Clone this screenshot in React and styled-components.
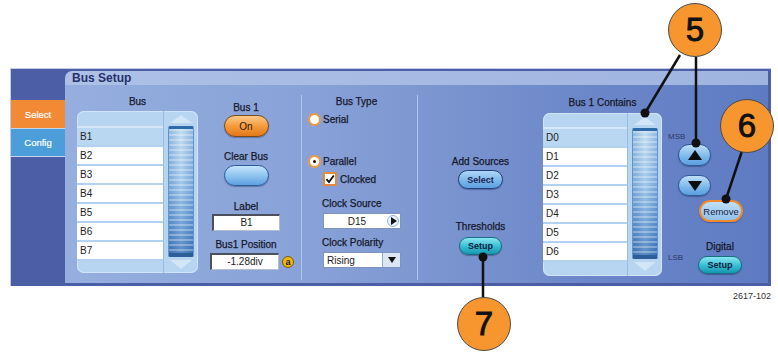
import styled, { createGlobalStyle } from 'styled-components';

const Global = createGlobalStyle`
  html, body { margin: 0; padding: 0; background: #fff; }
  body { font-family: "Liberation Sans", Arial, sans-serif; }
`;

const Page = styled.div`
  position: relative;
  width: 778px;
  height: 352px;
  padding-top: 68px;
  box-sizing: border-box;
  overflow: hidden;
`;

const Frame = styled.div`
  margin-left: 10px;
  width: 761px;
  height: 218px;
  box-sizing: border-box;
  display: flex;
  background: #4c5fa6;
  border-top: 1px solid #c3cbe6;
  border-left: 1px solid #c3cbe6;
`;

const Sidebar = styled.div`
  width: 54px;
  display: flex;
  flex-direction: column;
  padding-top: 31px;
`;

const Tab = styled.div`
  height: ${p => p.$h}px;
  box-sizing: border-box;
  background: ${p => (p.$active ? '#f28a35' : '#4b9ed9')};
  border-bottom: 1px solid #c6d3ee;
  color: #fff;
  font-size: 9.5px;
  -webkit-text-stroke: 0.2px #fff;
  display: flex;
  align-items: center;
  justify-content: center;
`;

const Panel = styled.div`
  width: 703px;
  margin: 2px 3px 3px 0;
  display: flex;
  flex-direction: column;
`;

const Header = styled.div`
  height: 14px;
  border-radius: 7px 0 0 0;
  background: linear-gradient(90deg, #adc0e6, #9fb4df);
  color: #26306c;
  font-size: 12px;
  font-weight: 700;
  line-height: 14px;
  padding-left: 7px;
`;

const Body = styled.div`
  flex: 1;
  display: flex;
  background: linear-gradient(90deg, #96afdf 0%, #88a1d7 35%, #6f8aca 70%, #5e7ac2 100%);
`;

const Col = styled.div`
  width: ${p => p.$w}px;
  box-sizing: border-box;
  display: flex;
  flex-direction: column;
  align-items: ${p => p.$align || 'flex-start'};
  padding-left: ${p => p.$pl || 0}px;
  padding-right: ${p => p.$pr || 0}px;
`;

const Divider = styled.div`
  width: 1px;
  margin: 10px 0 3px;
  background: #b2c5ea;
`;

const Label = styled.div`
  font-size: 10px;
  line-height: 12px;
  color: #16182a;
  -webkit-text-stroke: 0.25px #16182a;
  white-space: nowrap;
  margin-top: ${p => p.$mt || 0}px;
  margin-left: ${p => p.$ml || 0}px;
  padding-right: ${p => p.$pr || 0}px;
  align-self: ${p => p.$self || 'auto'};
  text-align: center;
`;

const Tiny = styled.div`
  font-size: 8px;
  line-height: 10px;
  color: #2c3768;
  margin-top: ${p => p.$mt || 0}px;
`;

/* lists */
const ListBox = styled.div`
  display: flex;
  width: ${p => p.$w}px;
  height: ${p => p.$h}px;
  margin-top: ${p => p.$mt}px;
  background: #b7d4f0;
  border-radius: 7px;
  overflow: hidden;
  box-shadow: inset 0 0 0 1px #d2e4f6;
`;

const Rows = styled.div`
  width: ${p => p.$w}px;
  display: flex;
  flex-direction: column;
  border-right: 1px solid #97bde5;
`;

const RowHead = styled.div`
  height: ${p => p.$h}px;
  box-sizing: border-box;
  border-bottom: 2px solid #d6e8f8;
`;

const Row = styled.div`
  height: 19px;
  box-sizing: border-box;
  border-bottom: 2px solid #b3d2ef;
  background: ${p => (p.$sel ? '#bad7f2' : '#fff')};
  font-size: 10px;
  line-height: 17px;
  padding-left: 3px;
  color: #222;
`;

const Scroll = styled.div`
  flex: 1;
  display: flex;
  flex-direction: column;
  align-items: center;
  padding-top: 4px;
`;

const Tri = styled.div`
  width: 0;
  height: 0;
  border-left: 11px solid transparent;
  border-right: 11px solid transparent;
  ${p => (p.$down ? 'border-top: 9px solid #d3e6f7;' : 'border-bottom: 8px solid #d3e6f7;')}
  margin-top: ${p => p.$mt || 0}px;
`;

const Thumb = styled.div`
  width: 26px;
  height: ${p => p.$h}px;
  margin-top: 3px;
  box-sizing: border-box;
  border-radius: 2px;
  border-top: 3px solid #2f6aa8;
  border-bottom: 4px solid #2c5e99;
  border-left: 1px solid #5f95cf;
  border-right: 1px solid #5f95cf;
  background:
    repeating-linear-gradient(180deg, rgba(255, 255, 255, 0.3) 0 2px, rgba(255, 255, 255, 0) 2px 5px),
    linear-gradient(90deg, rgba(40, 90, 160, 0.25) 0%, rgba(255, 255, 255, 0.15) 50%, rgba(40, 90, 160, 0.25) 100%),
    linear-gradient(180deg, #b8d8f2 0%, #96c2ea 40%, #5e96d1 78%, #4079ba 100%);
`;

function List({ items, w, h, rowW, head, mt, thumbH }) {
  return (
    <ListBox $w={w} $h={h} $mt={mt}>
      <Rows $w={rowW}>
        <RowHead $h={head} />
        {items.map((t, i) => (
          <Row key={t} $sel={i === 0}>{t}</Row>
        ))}
      </Rows>
      <Scroll>
        <Tri />
        <Thumb $h={thumbH} />
        <Tri $down $mt={3} />
      </Scroll>
    </ListBox>
  );
}

/* buttons */
const skins = {
  orange: ['linear-gradient(180deg, #fdc98a 0%, #f59c3d 50%, #e27817 100%)', '#7c4a16', '#2a1806'],
  blue: ['linear-gradient(180deg, #c6e4fb 0%, #8fc5f0 50%, #5e9fe0 100%)', '#2d5a9a', '#111'],
  select: ['linear-gradient(180deg, #aed6f7 0%, #78b5ea 60%, #5d9fe0 100%)', '#23407c', '#1b2450'],
  teal: ['linear-gradient(180deg, #8ae6f1 0%, #35bdd3 55%, #1796b0 100%)', '#17707f', '#10203a'],
  remove: ['linear-gradient(180deg, #c0dff8 0%, #8fc2ec 100%)', '#f08a2a', '#1a2040'],
  arrow: ['linear-gradient(180deg, #c0def8 0%, #7ab6ea 60%, #5c9ee0 100%)', '#2d5a9a', '#111'],
};

const Pill = styled.div`
  width: ${p => p.$w}px;
  height: ${p => p.$h}px;
  margin-top: ${p => p.$mt || 0}px;
  margin-left: ${p => p.$ml || 0}px;
  box-sizing: border-box;
  border-radius: 999px;
  background: ${p => skins[p.$skin][0]};
  border: ${p => (p.$skin === 'remove' ? 2 : 1.5)}px solid ${p => skins[p.$skin][1]};
  color: ${p => skins[p.$skin][2]};
  font-size: ${p => p.$fs || 9}px;
  font-weight: ${p => (p.$bold ? 700 : 400)};
  display: flex;
  align-items: center;
  justify-content: center;
  box-shadow: 0 1px 1px rgba(20, 30, 70, 0.35);
`;

const ArrowGlyph = styled.span`
  width: 0;
  height: 0;
  border-left: 7px solid transparent;
  border-right: 7px solid transparent;
  ${p => (p.$down ? 'border-top: 10px solid #0d0d0d;' : 'border-bottom: 10px solid #0d0d0d;')}
`;

/* column 2 fields */
const TextBox = styled.div`
  width: ${p => p.$w}px;
  height: 17px;
  box-sizing: border-box;
  background: #fff;
  border: 1px solid #b5bfd0;
  border-top: 2px solid #4b505c;
  border-left: 2px solid #4b505c;
  font-size: 10px;
  line-height: 14px;
  text-align: center;
  color: #222;
  margin-top: ${p => p.$mt || 0}px;
`;

const PosRow = styled.div`
  display: flex;
  align-items: center;
  gap: 3px;
  align-self: flex-start;
  margin: 2px 0 0 12px;
`;

const Badge = styled.span`
  width: 12px;
  height: 12px;
  border-radius: 50%;
  background: #f2b70e;
  border: 1px solid #7a5a00;
  box-sizing: border-box;
  font-size: 9px;
  font-weight: 700;
  line-height: 10px;
  text-align: center;
  color: #222;
`;

/* column 3 */
const Option = styled.div`
  display: flex;
  align-items: center;
  gap: ${p => p.$gap || 2}px;
  margin-top: ${p => p.$mt || 0}px;
  margin-left: ${p => p.$ml || 0}px;
  font-size: 10px;
  color: #16182a;
  -webkit-text-stroke: 0.25px #16182a;
`;

const Radio = styled.span`
  width: 13px;
  height: 13px;
  border-radius: 50%;
  box-sizing: border-box;
  background: #fff;
  border: 2px solid #f29a3a;
  display: flex;
  align-items: center;
  justify-content: center;
  &::after {
    content: '';
    width: 3px;
    height: 3px;
    border-radius: 50%;
    background: ${p => (p.$on ? '#111' : 'transparent')};
  }
`;

const Check = styled.span`
  width: 14px;
  height: 14px;
  box-sizing: border-box;
  background: #fff;
  border: 2px solid #e48a3a;
  display: flex;
  align-items: center;
  justify-content: center;
`;

const Field = styled.div`
  width: 78px;
  height: 16px;
  box-sizing: border-box;
  margin: 3px 0 0 15px;
  background: #fff;
  border: 1px solid #8094bb;
  display: flex;
  align-items: center;
  font-size: 10px;
  color: #222;
`;

const FieldText = styled.span`
  flex: 1;
  text-align: ${p => (p.$center ? 'center' : 'left')};
  padding-left: 3px;
`;

const PlayDot = styled.span`
  width: 12px;
  height: 12px;
  margin-right: 1px;
  border-radius: 50%;
  border: 1px solid #8fb6e3;
  box-sizing: border-box;
  background: #e9f3fc;
  display: flex;
  align-items: center;
  justify-content: center;
  &::after {
    content: '';
    margin-left: 2px;
    border-top: 4px solid transparent;
    border-bottom: 4px solid transparent;
    border-left: 6px solid #111;
  }
`;

const DropSeg = styled.span`
  width: 17px;
  height: 100%;
  border-left: 1px solid #9aabc8;
  background: #dbe6f3;
  display: flex;
  align-items: center;
  justify-content: center;
  &::after {
    content: '';
    border-left: 4px solid transparent;
    border-right: 4px solid transparent;
    border-top: 6px solid #111;
  }
`;

/* column 6 */
const BottomRow = styled.div`
  display: flex;
  margin-top: 19px;
`;

const LsbCell = styled.div`
  width: 30px;
  padding-top: 12px;
`;

const Group = styled.div`
  width: 44px;
  display: flex;
  flex-direction: column;
  align-items: center;
`;

const Footer = styled.div`
  width: 771px;
  margin-top: 5px;
  text-align: right;
  font-size: 9px;
  line-height: 10px;
  color: #333;
`;

/* callouts */
const Overlay = styled.svg`
  position: absolute;
  left: 0;
  top: 0;
  pointer-events: none;
`;

const Callout = styled.div`
  position: absolute;
  left: ${p => p.$x - 27}px;
  top: ${p => p.$y - 27}px;
  width: 54px;
  height: 54px;
  box-sizing: border-box;
  border-radius: 50%;
  background: #f7962f;
  border: 1.5px solid #4a4a4a;
  display: flex;
  align-items: center;
  justify-content: center;
  font-size: 33px;
  color: #111;
  -webkit-text-stroke: 0.9px #111;
`;

const bus = ['B1', 'B2', 'B3', 'B4', 'B5', 'B6', 'B7'];
const contains = ['D0', 'D1', 'D2', 'D3', 'D4', 'D5', 'D6'];

// [x1, y1, x2, y2, dotX, dotY]
const lines = [
  [680, 55, 645, 113, 645, 113],
  [696, 57, 696, 143, 696, 143],
  [742, 151, 726, 199, 726, 199],
  [483, 257, 483, 297, 483, 257],
];

export default function App() {
  return (
    <>
      <Global />
      <Page>
        <Frame>
          <Sidebar>
            <Tab $active $h={29}>Select</Tab>
            <Tab $h={28}>Config</Tab>
          </Sidebar>
          <Panel>
            <Header>Bus Setup</Header>
            <Body>
              <Col $w={133} $pl={12}>
                <Label $mt={11} $self="stretch">Bus</Label>
                <List items={bus} w={121} h={162} rowW={86} head={17} mt={3} thumbH={131} />
              </Col>

              <Col $w={103} $pr={7} $align="center">
                <Label $mt={17}>Bus 1</Label>
                <Pill $skin="orange" $w={45} $h={22} $mt={1} $fs={10}>On</Pill>
                <Label $mt={14}>Clear Bus</Label>
                <Pill $skin="blue" $w={45} $h={21} $mt={2} />
                <Label $mt={15}>Label</Label>
                <TextBox $w={68} $mt={1}>B1</TextBox>
                <Label $mt={8}>Bus1 Position</Label>
                <PosRow>
                  <TextBox $w={69}>-1.28div</TextBox>
                  <Badge>a</Badge>
                </PosRow>
              </Col>

              <Divider />

              <Col $w={115} $pl={6}>
                <Label $mt={11} $self="stretch" $pr={12}>Bus Type</Label>
                <Option $mt={5}>
                  <Radio />
                  Serial
                </Option>
                <Option $mt={29}>
                  <Radio $on />
                  Parallel
                </Option>
                <Option $mt={4} $ml={15} $gap={3}>
                  <Check>
                    <svg width="10" height="10" viewBox="0 0 10 10">
                      <path d="M1.5 5.2 L4 8 L8.8 1.5" fill="none" stroke="#111" strokeWidth="1.8" />
                    </svg>
                  </Check>
                  Clocked
                </Option>
                <Label $mt={12} $ml={14}>Clock Source</Label>
                <Field>
                  <FieldText $center>D15</FieldText>
                  <PlayDot />
                </Field>
                <Label $mt={8} $ml={14}>Clock Polarity</Label>
                <Field>
                  <FieldText>Rising</FieldText>
                  <DropSeg />
                </Field>
              </Col>

              <Divider />

              <Col $w={125} $align="center">
                <Label $mt={71}>Add Sources</Label>
                <Pill $skin="select" $w={45} $h={19} $mt={2} $bold>Select</Pill>
                <Label $mt={32}>Thresholds</Label>
                <Pill $skin="teal" $w={43} $h={18} $mt={4} $bold>Setup</Pill>
              </Col>

              <Col $w={119}>
                <Label $mt={12} $self="stretch">Bus 1 Contains</Label>
                <List items={contains} w={119} h={163} rowW={84} head={16} mt={4} thumbH={131} />
              </Col>

              <Col $w={106} $pl={6}>
                <Tiny $mt={47}>MSB</Tiny>
                <Pill $skin="arrow" $w={33} $h={22} $mt={2} $ml={10}>
                  <ArrowGlyph />
                </Pill>
                <Pill $skin="arrow" $w={33} $h={21} $mt={9} $ml={10}>
                  <ArrowGlyph $down />
                </Pill>
                <Pill $skin="remove" $w={44} $h={22} $mt={4} $ml={31} $fs={9.5}>Remove</Pill>
                <BottomRow>
                  <LsbCell>
                    <Tiny>LSB</Tiny>
                  </LsbCell>
                  <Group>
                    <Label>Digital</Label>
                    <Pill $skin="teal" $w={44} $h={18} $mt={3} $bold>Setup</Pill>
                  </Group>
                </BottomRow>
              </Col>
            </Body>
          </Panel>
        </Frame>
        <Footer>2617-102</Footer>

        <Overlay width="778" height="352">
          {lines.map(([x1, y1, x2, y2, dx, dy], i) => (
            <g key={i}>
              <line x1={x1} y1={y1} x2={x2} y2={y2} stroke="#111" strokeWidth="2.5" />
              <circle cx={dx} cy={dy} r="4.5" fill="#111" />
            </g>
          ))}
        </Overlay>
        <Callout $x={695} $y={30}>5</Callout>
        <Callout $x={747} $y={126}>6</Callout>
        <Callout $x={484} $y={324}>7</Callout>
      </Page>
    </>
  );
}
